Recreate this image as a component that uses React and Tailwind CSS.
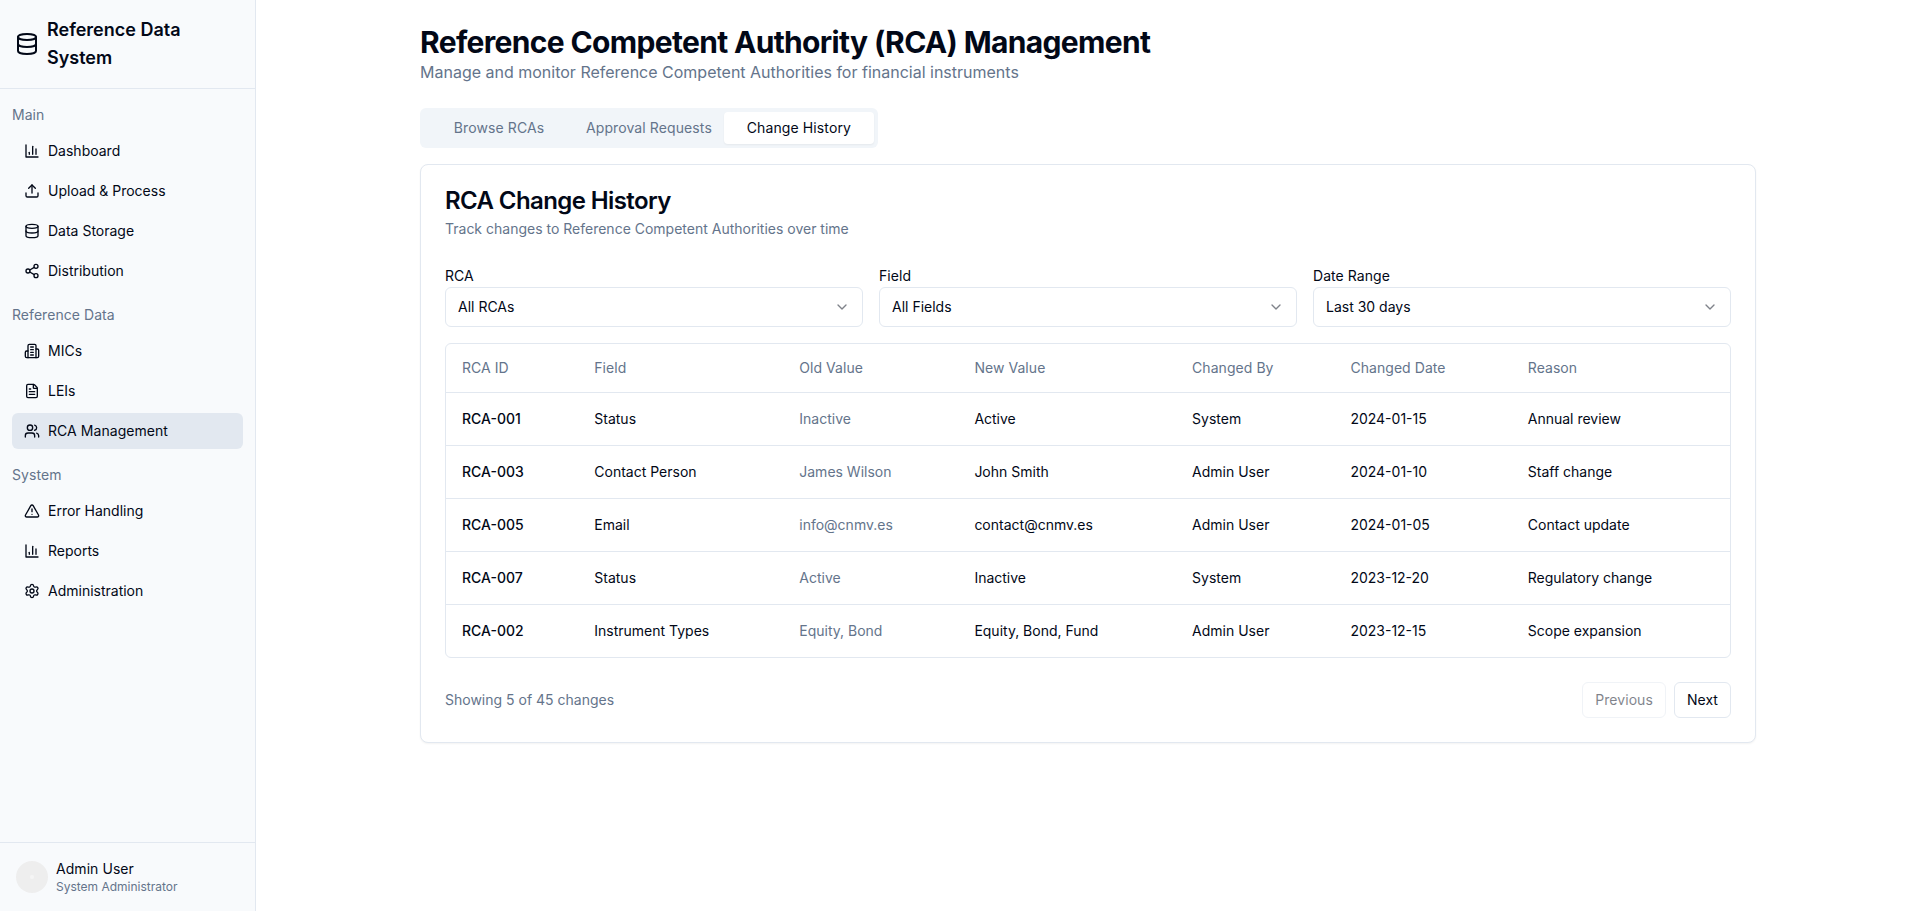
import React from 'react';
import {
  AlertTriangle,
  ChevronDown,
  Database,
  FileText,
  Settings,
  Share2,
  Upload,
  Users,
} from 'lucide-react';

// older lucide drawings, the current package has redrawn these two
function BarChartIcon({ className }) {
  return (
    <svg className={className} viewBox="0 0 24 24" fill="none" stroke="currentColor" strokeWidth="2" strokeLinecap="round" strokeLinejoin="round">
      <path d="M3 3v18h18" />
      <path d="M18 17V9" />
      <path d="M13 17V5" />
      <path d="M8 17v-3" />
    </svg>
  );
}

function BuildingIcon({ className }) {
  return (
    <svg className={className} viewBox="0 0 24 24" fill="none" stroke="currentColor" strokeWidth="2" strokeLinecap="round" strokeLinejoin="round">
      <path d="M6 22V4a2 2 0 0 1 2-2h8a2 2 0 0 1 2 2v18Z" />
      <path d="M6 12H4a2 2 0 0 0-2 2v6a2 2 0 0 0 2 2h2" />
      <path d="M18 9h2a2 2 0 0 1 2 2v9a2 2 0 0 1-2 2h-2" />
      <path d="M10 6h4" />
      <path d="M10 10h4" />
      <path d="M10 14h4" />
      <path d="M10 18h4" />
    </svg>
  );
}

const navGroups = [
  {
    label: 'Main',
    items: [
      { name: 'Dashboard', icon: BarChartIcon },
      { name: 'Upload & Process', icon: Upload },
      { name: 'Data Storage', icon: Database },
      { name: 'Distribution', icon: Share2 },
    ],
  },
  {
    label: 'Reference Data',
    items: [
      { name: 'MICs', icon: BuildingIcon },
      { name: 'LEIs', icon: FileText },
      { name: 'RCA Management', icon: Users, active: true },
    ],
  },
  {
    label: 'System',
    items: [
      { name: 'Error Handling', icon: AlertTriangle },
      { name: 'Reports', icon: BarChartIcon },
      { name: 'Administration', icon: Settings },
    ],
  },
];

const filters = [
  { label: 'RCA', value: 'All RCAs' },
  { label: 'Field', value: 'All Fields' },
  { label: 'Date Range', value: 'Last 30 days' },
];

const columns = ['RCA ID', 'Field', 'Old Value', 'New Value', 'Changed By', 'Changed Date', 'Reason'];

const rows = [
  ['RCA-001', 'Status', 'Inactive', 'Active', 'System', '2024-01-15', 'Annual review'],
  ['RCA-003', 'Contact Person', 'James Wilson', 'John Smith', 'Admin User', '2024-01-10', 'Staff change'],
  ['RCA-005', 'Email', 'info@cnmv.es', 'contact@cnmv.es', 'Admin User', '2024-01-05', 'Contact update'],
  ['RCA-007', 'Status', 'Active', 'Inactive', 'System', '2023-12-20', 'Regulatory change'],
  ['RCA-002', 'Instrument Types', 'Equity, Bond', 'Equity, Bond, Fund', 'Admin User', '2023-12-15', 'Scope expansion'],
];

function Sidebar() {
  return (
    <aside className="flex h-screen w-64 shrink-0 flex-col border-r border-[#e2e8f0] bg-[#f8fafc]">
      <div className="flex items-center gap-2 border-b border-[#e2e8f0] py-4 pl-[15px] pr-4">
        <Database className="h-6 w-6 shrink-0" />
        <span className="text-lg font-semibold">Reference Data System</span>
      </div>
      <nav className="flex flex-1 flex-col gap-4 px-3 pt-4">
        {navGroups.map((group) => (
          <div key={group.label}>
            <div className="mb-2 text-sm tracking-[0.004em] text-[#64748b]">{group.label}</div>
            <ul className="flex flex-col gap-1">
              {group.items.map((item) => (
                <li
                  key={item.name}
                  className={`flex h-9 items-center gap-2 rounded-md px-3 text-sm ${item.active ? 'bg-[#e2e8f0] tracking-[0.004em]' : ''}`}
                >
                  <item.icon className="h-4 w-4" />
                  <span>{item.name}</span>
                </li>
              ))}
            </ul>
          </div>
        ))}
      </nav>
      <div className="flex items-center gap-2 border-t border-[#e2e8f0] p-4">
        <div className="flex h-8 w-8 items-center justify-center rounded-full bg-[#eeeeee]">
          <div className="h-1 w-1 rounded-full bg-[#f5f5f5]" />
        </div>
        <div>
          <div className="text-sm tracking-[0.004em]">Admin User</div>
          <div className="text-xs text-[#64748b]">System Administrator</div>
        </div>
      </div>
    </aside>
  );
}

export default function App() {
  return (
    <div className="flex h-screen bg-white text-[#020817] font-['Inter',sans-serif]">
      <Sidebar />
      <main className="flex-1">
        <div className="mx-auto max-w-[1400px] px-8 py-6">
          <h1 className="text-3xl font-bold tracking-[-0.022em]">Reference Competent Authority (RCA) Management</h1>
          <p className="text-base text-[#64748b]">Manage and monitor Reference Competent Authorities for financial instruments</p>

          <div className="mt-6 inline-grid h-10 grid-cols-3 items-center rounded-md bg-[#f1f5f9] p-1 text-sm tracking-[0.0075em] text-[#64748b]">
            <div className="px-3 text-center">Browse RCAs</div>
            <div className="px-3 text-center">Approval Requests</div>
            <div className="rounded-sm bg-white px-3 py-1.5 text-center text-[#020817] shadow-[0_1px_2px_0_rgb(0_0_0/0.05)]">Change History</div>
          </div>

          <section className="mt-4 rounded-lg border border-[#e2e8f0] bg-white p-6 shadow-[0_1px_2px_0_rgb(0_0_0/0.05)]">
            <h2 className="text-2xl leading-none font-semibold tracking-tight">RCA Change History</h2>
            <p className="mt-1.5 text-sm text-[#64748b]">Track changes to Reference Competent Authorities over time</p>

            <div className="mt-7 grid grid-cols-3 gap-4">
              {filters.map((f) => (
                <div key={f.label}>
                  <div className="text-sm leading-[18px] pb-0.5 tracking-[0.004em]">{f.label}</div>
                  <div className="flex h-10 items-center justify-between rounded-md border border-[#e2e8f0] bg-white px-3 text-sm">
                    <span>{f.value}</span>
                    <ChevronDown className="h-4 w-4 opacity-50" />
                  </div>
                </div>
              ))}
            </div>

            <div className="mt-4 rounded-md border border-[#e2e8f0]">
              <table className="w-full text-sm">
                <thead>
                  <tr className="border-b border-[#e2e8f0]">
                    {columns.map((c) => (
                      <th key={c} className="h-12 px-4 text-left font-normal tracking-[0.004em] text-[#64748b]">{c}</th>
                    ))}
                  </tr>
                </thead>
                <tbody>
                  {rows.map((row, i) => (
                    <tr key={row[0]} className={i < rows.length - 1 ? 'border-b border-[#e2e8f0]' : ''}>
                      {row.map((cell, j) => (
                        <td
                          key={j}
                          className={`p-4 ${j === 0 ? 'pr-[17px] font-medium' : ''} ${j === 2 ? 'text-[#64748b]' : ''}`}
                        >
                          {cell}
                        </td>
                      ))}
                    </tr>
                  ))}
                </tbody>
              </table>
            </div>

            <div className="mt-6 flex items-center justify-between">
              <span className="text-sm text-[#64748b]">Showing 5 of 45 changes</span>
              <div className="flex gap-2">
                <button className="h-9 rounded-md border border-[#e2e8f0] bg-white px-3 text-sm tracking-[0.004em] opacity-50">Previous</button>
                <button className="h-9 rounded-md border border-[#e2e8f0] bg-white px-3 text-sm tracking-[0.004em]">Next</button>
              </div>
            </div>
          </section>
        </div>
      </main>
    </div>
  );
}
